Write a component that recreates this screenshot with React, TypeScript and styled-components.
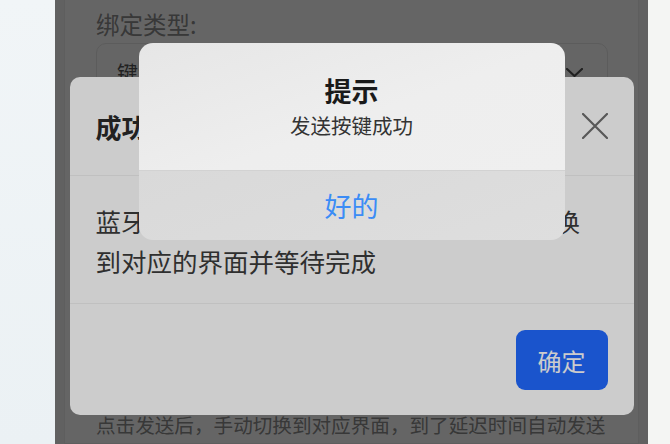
import React from 'react';
import styled, { createGlobalStyle } from 'styled-components';

const GlobalStyle = createGlobalStyle`
	html, body {
		margin: 0;
		padding: 0;
	}
	body {
		width: 670px;
		height: 444px;
		overflow: hidden;
		font-family: "Noto Sans CJK SC", "Noto Sans", sans-serif;
		background: #eff3f5;
	}
`;

const Screen = styled.div`
	display: flex;
	height: 444px;
	overflow: hidden;
`;

const Gutter = styled.div<{ $side: 'left' | 'right' }>`
	flex: ${(p) => (p.$side === 'left' ? '0 0 55px' : '1')};
	background: ${(p) =>
		p.$side === 'left'
			? 'linear-gradient(180deg, #f1f5f7 0%, #ebf1f4 100%)'
			: '#f4f5f3'};
`;

const Phone = styled.div`
	position: relative;
	flex: 0 0 593px;
	box-sizing: border-box;
	padding: 0 9px;
	background: #f5f5f5;
	overflow: hidden;
`;

const Card = styled.div`
	height: 100%;
	box-sizing: border-box;
	padding: 8px 30px 0 31px;
	background: #fff;
	border: 1px solid #ececec;
	border-top: none;
	display: flex;
	flex-direction: column;
`;

const FieldLabel = styled.div<{ $gap?: number }>`
	margin-top: ${(p) => p.$gap ?? 0}px;
	font-size: 23.5px;
	line-height: 32px;
	color: #8c8c8c;
`;

const FieldBox = styled.div`
	margin-top: 3px;
	height: 58px;
	box-sizing: border-box;
	display: flex;
	align-items: center;
	justify-content: space-between;
	padding: 0 24px 0 20px;
	border: 1px solid #e6e6e6;
	border-radius: 10px;
	font-size: 21px;
	color: #555;
`;

const SendButton = styled.div`
	margin-top: 18px;
	height: 54px;
	border-radius: 10px;
	background: #216aff;
	color: #fff;
	font-size: 22px;
	display: flex;
	align-items: center;
	justify-content: center;
`;

const Hint = styled.div`
	margin-top: 23px;
	font-size: 19.6px;
	line-height: 30px;
	color: #8c8c8c;
	white-space: nowrap;
`;

const Mask = styled.div<{ $dim: number; $top: number }>`
	position: absolute;
	inset: 0;
	background: rgba(0, 0, 0, ${(p) => p.$dim});
	display: flex;
	justify-content: center;
	align-items: flex-start;
	padding-top: ${(p) => p.$top}px;
`;

const Modal = styled.div`
	width: 564px;
	background: #fff;
	border-radius: 10px;
	display: flex;
	flex-direction: column;
`;

const ModalHeader = styled.div`
	height: 98px;
	display: flex;
	align-items: center;
	justify-content: space-between;
	padding: 0 26px;
	border-bottom: 1px solid #f0f0f0;
`;

const ModalTitle = styled.div`
	font-size: 26px;
	font-weight: bold;
	color: #2a2a2a;
`;

const CloseButton = styled.div`
	width: 26px;
	height: 26px;
	display: flex;
`;

const ModalBody = styled.div`
	padding: 25px 38px 22px 26px;
	font-size: 25.5px;
	line-height: 40px;
	color: #3b3b3b;
`;

const ModalFooter = styled.div`
	display: flex;
	justify-content: flex-end;
	padding: 26px 26px 25px;
	border-top: 1px solid #f0f0f0;
`;

const PrimaryButton = styled.div`
	width: 92px;
	height: 60px;
	border-radius: 9px;
	background: #216aff;
	color: #fff;
	font-size: 24px;
	display: flex;
	align-items: center;
	justify-content: center;
`;

const Alert = styled.div`
	width: 426px;
	border-radius: 14px;
	overflow: hidden;
	text-align: center;
`;

const AlertContent = styled.div`
	padding: 31px 20px;
	background: linear-gradient(160deg, #e6e6e6 0%, #eeeeee 55%, #efefef 100%);
	border-bottom: 1px solid #d2d2d2;
`;

const AlertTitle = styled.div`
	font-size: 27px;
	line-height: 34px;
	font-weight: bold;
	color: #1a1a1a;
`;

const AlertMessage = styled.div`
	margin-top: 3px;
	font-size: 20.5px;
	line-height: 28px;
	color: #333;
`;

const AlertAction = styled.div`
	height: 69px;
	display: flex;
	align-items: center;
	justify-content: center;
	background: linear-gradient(160deg, #d9d9d9 0%, #dedede 100%);
	font-size: 27px;
	color: #3b8cf6;
`;

const Chevron = () => (
	<svg width="17" height="9" viewBox="0 0 17 9" fill="none">
		<path d="M1 1l7.5 7L16 1" stroke="#555" strokeWidth="2.2" strokeLinecap="round" strokeLinejoin="round" />
	</svg>
);

const CloseIcon = () => (
	<svg width="26" height="26" viewBox="0 0 26 26" fill="none">
		<path d="M1 1l24 24M25 1L1 25" stroke="#6f6f6f" strokeWidth="2.2" strokeLinecap="round" />
	</svg>
);

export default function App() {
	return (
		<>
			<GlobalStyle />
			<Screen>
				<Gutter $side="left" />
				<Phone>
					<Card>
						<FieldLabel>绑定类型:</FieldLabel>
						<FieldBox>
							<span>键盘按键</span>
							<Chevron />
						</FieldBox>
						<FieldLabel $gap={14}>按键:</FieldLabel>
						<FieldBox>Enter</FieldBox>
						<FieldLabel $gap={14}>延迟时间(秒):</FieldLabel>
						<FieldBox>3</FieldBox>
						<SendButton>发送</SendButton>
						<Hint>点击发送后，手动切换到对应界面，到了延迟时间自动发送</Hint>
					</Card>

					<Mask $dim={0.5} $top={77}>
						<Modal>
							<ModalHeader>
								<ModalTitle>成功</ModalTitle>
								<CloseButton>
									<CloseIcon />
								</CloseButton>
							</ModalHeader>
							<ModalBody>
								蓝牙按键已发送成功，请在设备上手动切换到对应的界面并等待完成
							</ModalBody>
							<ModalFooter>
								<PrimaryButton>确定</PrimaryButton>
							</ModalFooter>
						</Modal>
					</Mask>

					<Mask $dim={0.2} $top={43}>
						<Alert>
							<AlertContent>
								<AlertTitle>提示</AlertTitle>
								<AlertMessage>发送按键成功</AlertMessage>
							</AlertContent>
							<AlertAction>好的</AlertAction>
						</Alert>
					</Mask>
				</Phone>
				<Gutter $side="right" />
			</Screen>
		</>
	);
}
